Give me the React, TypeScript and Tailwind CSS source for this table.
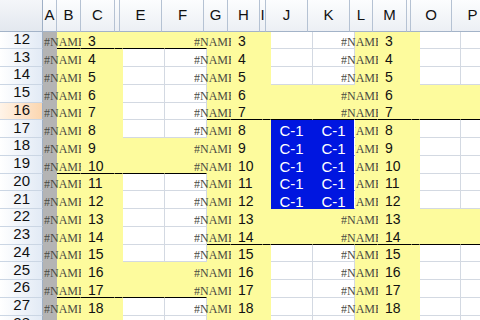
import React from "react";

type Col = { key: string; w: string };

// column widths measured off the sheet (D and N are hidden columns)
const COLS: Col[] = [
  { key: "A", w: "w-[14px]" },
  { key: "B", w: "w-[24px]" },
  { key: "C", w: "w-[34px]" },
  { key: "D", w: "w-[5px]" },
  { key: "E", w: "w-[42px]" },
  { key: "F", w: "w-[42px]" },
  { key: "G", w: "w-[24px]" },
  { key: "H", w: "w-[32px]" },
  { key: "I", w: "w-[6px]" },
  { key: "J", w: "w-[42px]" },
  { key: "K", w: "w-[42px]" },
  { key: "L", w: "w-[23px]" },
  { key: "M", w: "w-[34px]" },
  { key: "N", w: "w-[4px]" },
  { key: "O", w: "w-[41px]" },
  { key: "P", w: "w-[42px]" },
];

const HIDDEN = ["D", "N"];

const EXT1 = [12, 18, 19, 25, 26];
const EXT2 = [15, 16, 22, 23];
const LINED = [12, 16, 19, 23, 26];
const ROWS = Array.from({ length: 17 }, (_, i) => 12 + i);

const GRAY = "bg-[#b4b4b4] border-[#b4b4b4]";
const YELLOW = "bg-[#fdfb9d] border-[#fdfb9d]";
const BLUE = "bg-[#0016e0] border-[#0016e0]";
const WHITE = "bg-white border-[#d3d9e2]";

function fillFor(col: string, row: number) {
  const blue = row >= 17 && row <= 21;
  if (col === "A") return GRAY;
  if ("BCDGHILMN".includes(col)) return YELLOW;
  if ((col === "J" || col === "K") && blue) return BLUE;
  if ((col === "E" || col === "F") && EXT1.includes(row)) return YELLOW;
  if ("JKOP".includes(col) && EXT2.includes(row)) return YELLOW;
  return WHITE;
}

function blackBottom(col: string, row: number) {
  if (!LINED.includes(row)) return false;
  if (EXT1.includes(row)) return "BCDEF".includes(col);
  if (EXT2.includes(row)) return "GHIJKLMNOP".includes(col);
  return false;
}

function NameError({ narrow }: { narrow?: boolean }) {
  // #NAME? spills left out of the number cell and gets clipped
  return (
    <span
      className={`absolute right-full bottom-0 overflow-hidden whitespace-nowrap font-['Liberation_Serif',serif] text-[12px] leading-[12px] text-[#4a4a42] ${
        narrow ? "w-[23px]" : "w-[37px]"
      }`}
    >
      <span className={narrow ? "ml-[-14px]" : ""}>#NAME?</span>
    </span>
  );
}

function Row({ n }: { n: number }) {
  const blue = n >= 17 && n <= 21;
  return (
    <div className="flex h-[17.76px]">
      <div
        className={`flex w-[43px] shrink-0 items-center justify-end border-r border-b border-r-[#9fb0c6] border-b-[#cbd6e4] pr-[12px] pb-[2px] text-[15px] leading-[16px] text-[#111] ${
          n === 16
            ? "bg-linear-to-r from-[#fff4e8] to-[#fbd6b0]"
            : "bg-linear-to-r from-white to-[#e2eaf5]"
        }`}
      >
        {n}
      </div>
      {COLS.map((c) => {
        const num = c.key === "C" || c.key === "H" || c.key === "M";
        const c1 = blue && (c.key === "J" || c.key === "K");
        return (
          <div
            key={c.key}
            className={`relative box-border flex h-full shrink-0 items-end border-r border-b ${c.w} ${fillFor(c.key, n)} ${
              blackBottom(c.key, n) ? "border-b-black" : ""
            } ${blue && c.key === "K" ? "border-r-white" : ""} ${
              c1 ? "justify-center" : "pl-[7px]"
            }`}
          >
            {num && (
              <>
                <NameError narrow={blue && c.key === "M"} />
                <span className="text-[14px] leading-[13px] text-[#111]">{n - 9}</span>
              </>
            )}
            {c1 && <span className="text-[15px] leading-[13px] text-white">C-1</span>}
          </div>
        );
      })}
    </div>
  );
}

export default function App() {
  return (
    <div className="h-[320px] w-[480px] overflow-hidden bg-white font-['Liberation_Sans',Arial,sans-serif]">
      <div className="flex h-[31.5px] bg-linear-to-b from-[#fcfdfe] to-[#eceff4]">
        <div className="w-[43px] shrink-0 border-r border-b border-r-[#9fb0c6] border-b-[#a3b3c8] bg-linear-to-b from-[#f4f6f9] to-[#e3e8ef]" />
        {COLS.map((c) => (
          <div
            key={c.key}
            className={`flex shrink-0 items-center justify-center overflow-hidden border-r border-b border-r-[#b5c2d3] border-b-[#a3b3c8] text-[15px] text-[#111] ${c.w}`}
          >
            {HIDDEN.includes(c.key) ? "" : c.key}
          </div>
        ))}
      </div>
      {ROWS.map((n) => (
        <Row key={n} n={n} />
      ))}
    </div>
  );
}
